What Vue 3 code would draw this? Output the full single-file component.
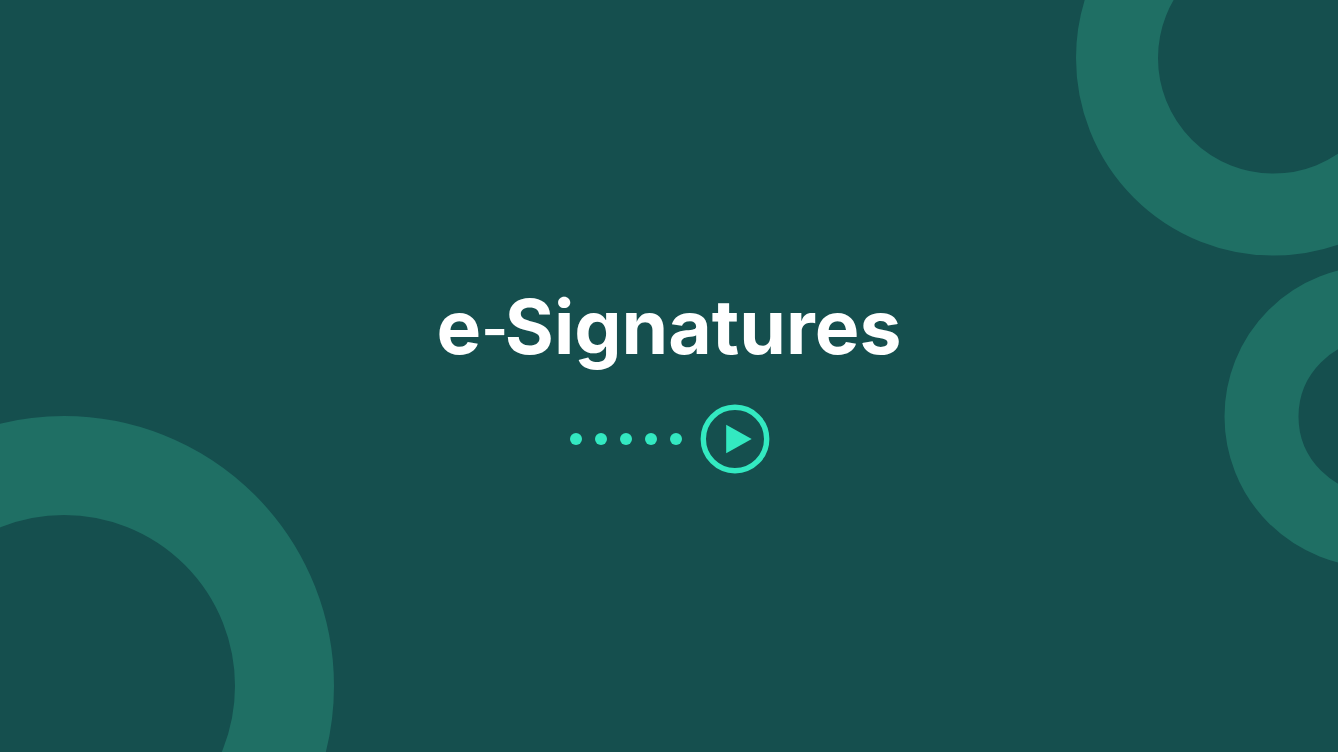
<script setup>
const dots = [1, 2, 3, 4, 5]
const rings = [
  { id: 'top', cx: 1273.5, cy: 58, r: 156.5, w: 82 },
  { id: 'right', cx: 1375, cy: 416.5, r: 113.5, w: 74 },
  { id: 'bottom', cx: 64, cy: 686, r: 220.5, w: 99 },
]
</script>

<template>
  <main class="slide">
    <svg class="decor" width="1338" height="752" viewBox="0 0 1338 752" aria-hidden="true">
      <circle
        v-for="ring in rings"
        :key="ring.id"
        :cx="ring.cx"
        :cy="ring.cy"
        :r="ring.r"
        :stroke-width="ring.w"
        fill="none"
        stroke="#1f6f64"
      />
    </svg>
    <div class="content">
      <h1 class="title">e<span class="hyphen">-</span>Signatures</h1>
      <div class="progress">
        <div class="dots">
          <span v-for="dot in dots" :key="dot" class="dot"></span>
        </div>
        <svg class="play" width="70" height="70" viewBox="0 0 70 70" aria-hidden="true">
          <circle cx="35" cy="35" r="31.7" fill="none" stroke="#33e9c1" stroke-width="5.4" />
          <path d="M26.2 20.7 L51.7 35 L26.2 49.3 Z" fill="#33e9c1" />
        </svg>
      </div>
    </div>
  </main>
</template>

<style>
html, body {
  margin: 0;
  background: #154f4e;
}
</style>

<style scoped>
.slide {
  position: relative;
  width: 1338px;
  height: 752px;
  overflow: hidden;
  background: #154f4e;
  font-family: Inter, "Liberation Sans", sans-serif;
}
.decor {
  position: absolute;
  inset: 0;
}
.content {
  position: relative;
  display: flex;
  flex-direction: column;
  align-items: center;
  padding-top: 283px;
}
.title {
  margin: 0;
  height: 87px;
  color: #fff;
  font-size: 75px;
  font-weight: 700;
  line-height: 87px;
}
.hyphen {
  font-size: 58px;
  font-weight: 600;
  line-height: 0;
  letter-spacing: -3.5px;
  vertical-align: 4px;
}
.progress {
  display: flex;
  align-items: center;
  gap: 18px;
  margin-top: 34px;
  transform: translateX(1px);
}
.dots {
  display: flex;
  gap: 12.5px;
}
.dot {
  width: 12.5px;
  height: 12.5px;
  border-radius: 50%;
  background: #33e9c1;
}
.play {
  display: block;
}
</style>
